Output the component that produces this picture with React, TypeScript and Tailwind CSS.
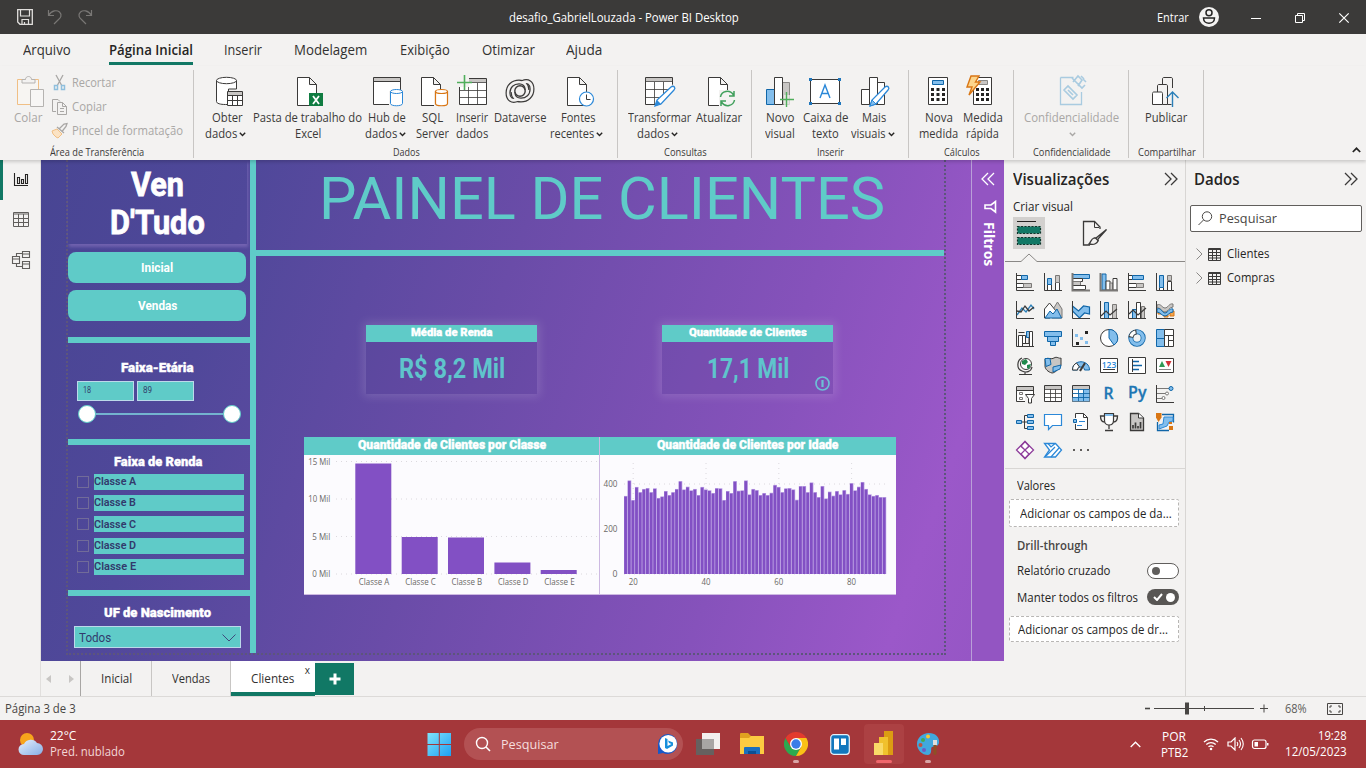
import React, { useLayoutEffect, useRef, useState } from 'react';

type FitProps = { w: number; children: string; className?: string };

/* Sets one line of text to an exact width, whatever the metrics of the installed font. */
function Fit({ w, children, className = '' }: FitProps) {
  const ref = useRef<HTMLSpanElement>(null);
  const [k, setK] = useState(1);
  useLayoutEffect(() => {
    if (ref.current && ref.current.offsetWidth) setK(w / ref.current.offsetWidth);
  }, [w, children]);
  return (
    <span className={`inline-block shrink-0 whitespace-nowrap ${className}`} style={{ width: w }}>
      <span ref={ref} className="inline-block origin-left" style={{ transform: `scaleX(${k})` }}>
        {children}
      </span>
    </span>
  );
}

function Svg({ s, children, className = '' }: { s: number; children: React.ReactNode; className?: string }) {
  return (
    <svg width={s} height={s} viewBox={`0 0 ${s} ${s}`} fill="none" className={`shrink-0 overflow-visible ${className}`}>
      {children}
    </svg>
  );
}

const INK = '#3b3a39';
const BLUE = '#2b88d8';
const SKY = '#83beec';
const NAVY = '#1066a8';

const Caret = ({ c = '#3b3a39' }: { c?: string }) => (
  <svg width="7" height="5" viewBox="0 0 7 5" fill="none" className="ml-[2px] inline-block">
    <path d="M.8.8 3.5 3.5 6.2.8" stroke={c} strokeWidth="1.4" />
  </svg>
);

/* ---------- Ribbon icons, 32 x 32 ---------- */
const Page = () => <path d="M5.5 2.5h12l7 7v21h-19z M17.5 2.5v7h7" fill="#fff" stroke={INK} />;
const ic: Record<string, React.ReactNode> = {
  paste: (
    <>
      <path d="M4.500 4.500h21v25h-21z" stroke="#f0bf85" fill="#f7f5f2" />
      <path d="M9 8V4.500h3.500c0-4 6-4 6 0H22V8z" fill="#f3f2f1" stroke="#b5b3b1" />
      <path d="M17.500 14.500h13v17h-13z" fill="#f7f6f5" stroke="#b5b3b1" />
    </>
  ),
  get: (
    <>
      <path d="M5.500 5.500v21c0 2 4 3 9 3h3V14h8V5.500" fill="#fff" stroke={INK} />
      <ellipse cx="15.500" cy="5.500" rx="10" ry="3.200" fill="#fff" stroke={INK} />
      <path d="M16.500 16.500h15v14h-15z" fill="#fff" stroke={INK} />
      <path d="M17 17h14v3H17z" fill="#c8c6c4" />
      <path d="M16.500 20.500h15M16.500 25.500h15M21.500 20v10M26.500 20v10" stroke={INK} />
    </>
  ),
  excel: (
    <>
      <Page />
      <path d="M17 18h14v13H17z" fill="#107c41" />
      <path d="m21 21 6 8m0-8-6 8" stroke="#fff" strokeWidth="1.800" />
    </>
  ),
  hub: (
    <>
      <path d="M2.500 2.500h27v27h-27z" fill="#fff" stroke={INK} />
      <path d="M3 3h26v3H3z" fill="#c8c6c4" /><path d="M2.500 6.500h27" stroke={INK} />
      <path d="M18 16h14v16H18z" fill="#f3f2f1" />
      <path d="M19.500 16.500v12c0 3 12 3 12 0v-12" fill="#fff" stroke={BLUE} />
      <ellipse cx="25.500" cy="16.500" rx="6" ry="2" fill="#fff" stroke={BLUE} />
    </>
  ),
  sql: (
    <>
      <Page />
      <path d="M18 16h14v16H18z" fill="#f3f2f1" />
      <path d="M19.500 16.500v12c0 3 12 3 12 0v-12" fill="#fff" stroke="#d97614" strokeWidth="1.200" />
      <ellipse cx="25.500" cy="16.500" rx="6" ry="2" fill="#fff" stroke="#d97614" strokeWidth="1.200" />
    </>
  ),
  insert: (
    <>
      <path d="M3.500 3.500h27v26h-27z" fill="#fff" stroke={INK} />
      <path d="M4 4h26v3H4z" fill="#c8c6c4" />
      <path d="M3.500 7.500h27M3.500 15.500h27M3.500 22.500h27M12.500 8v21M21.500 8v21" stroke={INK} strokeWidth=".8" />
      <path d="M0 0h13v12H0z" fill="#f3f2f1" />
      <path d="M8.500 0v15M1 7.500h15" stroke="#4fae5b" strokeWidth="1.600" />
    </>
  ),
  dataverse: (
    <>
      <path d="M13.500 24.500C8 27 4 24 4 18 4 11 9 7 15 7c5 0 8 3 8 8" stroke={INK} strokeWidth="5" />
      <path d="M18.500 7.500C24 5 28 8 28 14c0 7-5 11-11 11-5 0-8-3-8-8" stroke={INK} strokeWidth="5" />
      <path d="M13.500 24.500C8 27 4 24 4 18 4 11 9 7 15 7c5 0 8 3 8 8" stroke="#f3f2f1" strokeWidth="2.600" strokeLinecap="round" />
      <path d="M18.500 7.500C24 5 28 8 28 14c0 7-5 11-11 11-5 0-8-3-8-8" stroke="#f3f2f1" strokeWidth="2.600" strokeLinecap="round" />
      <circle cx="16" cy="16" r="5.200" stroke={INK} strokeWidth="1.400" />
    </>
  ),
  recent: (
    <>
      <Page />
      <circle cx="24.500" cy="24" r="7" fill="#fff" stroke={BLUE} strokeWidth="1.200" />
      <path d="M24.500 19.500V24.500h4" stroke={INK} />
    </>
  ),
  transform: (
    <>
      <path d="M2.500 2.500h27v27h-27z" fill="#fff" stroke={INK} />
      <path d="M3 3h26v3H3z" fill="#c8c6c4" />
      <path d="M2.500 6.500h27M2.500 14.500h27M2.500 22.500h27M11.500 7v22M20.500 7v22" stroke={INK} strokeWidth=".8" />
      <path d="M16 32h16V14L29 9z" fill="#f3f2f1" />
      <path d="m12 31 2-6 14-13c3-2 5 1 3 3L18 29z" fill="#fff" stroke={BLUE} strokeWidth="1.300" />
      <path d="m12 31 2-6 4 4z" fill={BLUE} />
    </>
  ),
  refresh: (
    <>
      <Page />
      <path d="M16 15h16v17H16z" fill="#f3f2f1" />
      <path d="M17.500 22c1-6 9-8 13-2M31 16v5h-5M31.500 25c-1 6-9 8-13 2M18 31v-5h5" stroke="#3f9f5b" strokeWidth="1.500" />
    </>
  ),
  newvis: (
    <>
      <path d="M2.500 14.500h8v15h-8z" fill={SKY} stroke={NAVY} />
      <path d="M18.500 7.500h7v22h-7z" fill="#c8c6c4" stroke="#8a8886" />
      <path d="M10.500 2.500h8v27h-8z" fill="#fff" stroke={INK} />
      <path d="M20 20h12v12H20z" fill="#f3f2f1" opacity=".7" />
      <path d="M22.500 17v15M16 24.500h14" stroke="#4fae5b" strokeWidth="1.400" />
    </>
  ),
  textbox: (
    <>
      <path d="M1.500 4.500h29v24h-29z" fill="#fff" stroke={INK} />
      <path d="M0 3h3v3H0zM29 3h3v3h-3zM0 27h3v3H0zM29 27h3v3h-3z" fill="#1f77bd" />
      <path d="m11 23 5-13 5 13M12.500 18.500h7" stroke={BLUE} strokeWidth="1.400" />
    </>
  ),
  morevis: (
    <>
      <path d="M3.500 14.500h8v15h-8zM19.500 7.500h7v22h-7zM11.500 2.500h8v27h-8z" fill="#fff" stroke={INK} />
      <path d="m12 31 2-6 13-13c3-2 5 1 3 3L18 29z" fill="#fff" stroke={BLUE} strokeWidth="1.300" />
      <path d="m12 31 2-6 4 4z" fill={SKY} stroke={BLUE} />
    </>
  ),
  calc: (
    <g transform="translate(-1 0)">
      <path d="M6.500 2.500h19v27h-19z" fill="#fff" stroke={INK} />
      <path d="M10.500 5.500h11v4h-11z" fill={SKY} stroke={NAVY} />
      <path d="M9 13h3v3H9zM14.500 13h3v3h-3zM20 13h3v3h-3zM9 18h3v3H9zM14.500 18h3v3h-3zM20 18h3v3h-3zM9 23h3v3H9zM14.500 23h3v3h-3zM20 23h3v3h-3z" fill="#252423" />
    </g>
  ),
  quick: (
    <g transform="translate(-1 0)">
      <path d="M7.500 2.500h18v27h-18z" fill="#fff" stroke={INK} />
      <path d="M12.500 5.500h9v4h-9z" fill="#c8c6c4" stroke="#8a8886" />
      <path d="M10 13h3v3h-3zM15 13h3v3h-3zM20 13h3v3h-3zM10 18h3v3h-3zM15 18h3v3h-3zM20 18h3v3h-3zM10 23h3v3h-3zM15 23h3v3h-3zM20 23h3v3h-3z" fill="#252423" />
      <path d="M5 1h8L9.500 7H14L3 20l3-8H1z" fill="#fcd58c" stroke="#d97614" strokeWidth="1.400" />
    </g>
  ),
  conf: (
    <>
      <path d="M5.500 2.500h13M5.500 2.500v27h21V17" stroke="#a9cbe0" strokeWidth="1.300" />
      <path d="m9 15 4-4 9 9-4 4zM13 15l5 5M17 3l10 10 3-3M18 7l5-6 4 4-4 6M26 1l3 3M31 7l-3-3" stroke="#a9cbe0" strokeWidth="1.600" />
    </>
  ),
  publish: (
    <>
      <path d="M2.500 18.500c0-1 .5-1.500 1.500-1.500h7c1 0 1.500.5 1.500 1.500v11h-10z" fill="#fff" stroke={INK} />
      <path d="M7.500 17v-6c0-1 .5-1.500 1.500-1.500h7c1 0 1.500.5 1.500 1.500v18.500h-5M12.500 9V4c0-1 .5-1.500 1.500-1.500h7c1 0 1.500.5 1.500 1.500v9M17.500 29.500h4" stroke={INK} />
      <path d="M22.500 32V17M16.500 23l6-6 6 6" stroke="#2b7fb8" strokeWidth="1.400" />
    </>
  ),
};

type Line = [string, number];
function RibbonItem({ icon, box, a, b, caret, dim }: { icon: string; box: string; a: Line; b?: Line; caret?: boolean; dim?: boolean }) {
  return (
    <div className={`flex flex-col items-center ${box} ${dim ? 'text-[#a9a7a5]' : 'text-[#3b3a39]'}`}>
      <Svg s={32}>{ic[icon]}</Svg>
      <div className="mt-[3px] flex h-4 items-center text-[12px] leading-4"><Fit w={a[1]}>{a[0]}</Fit></div>
      <div className={`flex h-4 items-center text-[12px] leading-4 ${b && caret ? 'pr-[3px]' : ''}`}>
        {b && <Fit w={b[1]}>{b[0]}</Fit>}
        {caret && <Caret c={dim ? '#a9a7a5' : '#252423'} />}
      </div>
    </div>
  );
}
function Group({ box, label, children }: { box: string; label: Line; children: React.ReactNode }) {
  return (
    <div className={`flex h-[88px] flex-col border-r border-[#c8c6c4] ${box}`}>
      <div className="flex h-[77px] pt-[5px]">{children}</div>
      <div className="flex h-[12px] items-center justify-center pl-px text-[10px] leading-none text-[#3b3a39]"><Fit w={label[1]}>{label[0]}</Fit></div>
    </div>
  );
}

/* ---------- Visual gallery icons, 18 x 18 ---------- */
const axis = <path d="M.5 0v17.500H18" stroke={INK} />;
const B = ({ d }: { d: string }) => <path d={d} fill={SKY} stroke={NAVY} />;
const G = ({ d }: { d: string }) => <path d={d} fill="#c8c6c4" stroke="#7a7876" />;
const W = ({ d }: { d: string }) => <path d={d} fill="#fff" stroke={INK} />;

const gallery: React.ReactNode[] = [
  <><W d="M.5 2.500h5v4h-5zM.5 10.500h8v4h-8z" /><B d="M5.500 2.500h6v4h-6z" /><G d="M7.500 10.500h8v4h-8z" />{axis}</>,
  <><W d="M3.500 11.500h4v6h-4zM11.500 9.500h4v8h-4z" /><B d="M3.500 5.500h4v6h-4z" /><G d="M11.500 2.500h4v7h-4z" />{axis}</>,
  <><B d="M.5 1.500h17v4H.5z" /><W d="M.5 5.500h10v3H.5z" /><G d="M.5 8.500h8v4H.5z" /><W d="M.5 12.500h13v4H.5z" /><path d="M.5 0v17.500H18" stroke="#7a7876" strokeWidth="2" /></>,
  <><B d="M2 1h4v16H2z" /><W d="M6 8h4v9H6z" /><G d="M10 10h3v7h-3z" /><W d="M13 5.500h4V17h-4z" /><path d="M.5 0v17.500H18" stroke="#7a7876" strokeWidth="2" /></>,
  <><W d="M.5 2.500h4v4h-4zM.5 10.500h8v4h-8z" /><B d="M4.500 2.500h11v4h-11z" /><G d="M8.500 10.500h7v4h-7z" />{axis}</>,
  <><W d="M3.500 14.500h4v3h-4zM11.500 8.500h4v9h-4z" /><B d="M3.500 2.500h4v12h-4z" /><G d="M11.500 2.500h4v5h-4z" />{axis}</>,
  <><path d="m1 14 5-7 4 4 5-7 3 4" stroke="#2b7fb8" strokeWidth="1.300" /><path d="m1 10 4 1 4-6 4 5 5-4" stroke={INK} strokeWidth="1.300" />{axis}</>,
  <><path d="m8 10 5.500-9L18 8v9H8z" fill="#c8c6c4" stroke="#7a7876" /><path d="M.5 17V8l5-6L12 10l-6 7z" fill="#fff" stroke={INK} /><B d="m1 17 5-7 3 3 4-5 4.500 9z" /></>,
  <><path d="m.5 5 6 5 5-5 6 1v7l-5-1-5 5-7-7z" fill={SKY} stroke={NAVY} strokeWidth="1.200" />{axis}</>,
  <><B d="M4.500 1.500h4v16h-4z" /><G d="M12.500 3.500h4v14h-4z" /><path d="m1 15 5-5 4 4 7-6" stroke={INK} strokeWidth="1.200" />{axis}</>,
  <><B d="M4.500 8.500h4v9h-4z" /><W d="M8.500 1.500h4v16h-4z" /><G d="M13.500 5.500h3v12h-3z" /><path d="m1 13 4-4 5 5 8-7" stroke={INK} strokeWidth="1.200" />{axis}</>,
  <><path d="M2 8h3v5H2zM8 12h4v4H8zM14 10h4v5h-4z" fill="#f2a44c" stroke="#d97614" /><path d="M1 4c4-2 5 3 8 3s4-5 8-4v3c-4 0-5 5-8 5s-5-5-8-4z" fill="#c8c6c4" stroke="#7a7876" /><path d="M1 8c4-2 5 4 8 4s4-5 8-4v3c-4 0-5 4-8 4s-5-4-8-4z" fill={SKY} stroke={NAVY} />{axis}</>,
  <><W d="M2.500 6.500h4v11h-4zM6.500 6.500h3v8h-3z" /><path d="M2.500 3.500h6M9 14.500h4V3" stroke={INK} /><B d="M10.500 2.500h3v6h-3z" /><W d="M13.500 2.500h3v15h-3z" />{axis}</>,
  <><B d="M.5 2.500h17v5H.5zM3.500 7.500h11v5h-11zM6.500 12.500h5v4h-5z" /></>,
  <>{axis}<path d="M13 2h3v3h-3zM4 13h3v3H4z" fill="#252423" /><path d="M3 5h3v3H3zM8 8h3v3H8zM13 12h3v3h-3z" fill={SKY} /></>,
  <><circle cx="9" cy="9" r="8.500" fill="#fff" stroke={INK} /><B d="M9 .5A8.500 8.500 0 0 1 14 16L9 9z" /></>,
  <><circle cx="9" cy="9" r="6.200" stroke={NAVY} strokeWidth="5" /><circle cx="9" cy="9" r="6.200" stroke={SKY} strokeWidth="3.400" /><path d="M2.900 8.500A6.200 6.200 0 0 1 8.500 2.900" stroke={INK} strokeWidth="5" /><path d="M3 7.500A6.200 6.200 0 0 1 7.500 3" stroke="#fff" strokeWidth="3.200" /></>,
  <><B d="M.5.5h8v9h-8zM.5 9.500h8v8h-8z" /><W d="M8.500.5h9v6h-9zM8.500 6.500h4v11h-4zM12.500 6.500h5v5h-5zM12.500 11.500h5v6h-5z" /></>,
  <><path d="M6 1C1 3 0 12 6 14c4 2 9 1 10-4M3 17.500h13M9 15v2" stroke={INK} strokeWidth="1.200" /><circle cx="10" cy="7" r="5.500" fill="#fff" stroke={INK} /><path d="M6 4l4-2 2 3-3 3-3-1zM11 8l4-1-2 5-2-1z" fill="#1f8a4c" /></>,
  <><path d="M1 2c4-2 6 1 9-1s5 1 7 0v7c-2 4-6 8-9 8-4-1-7-4-7-7z" fill="#c8c6c4" stroke={INK} /><B d="M1 1.500h5l1 6-5 2zM9 10l8-2-1 4-7 3z" /></>,
  <><path d="M.5 13C.5 2 17.500 2 17.500 13h-5c0-4-7-4-7 0z" fill={SKY} stroke={NAVY} /><path d="M.5 13c0-4 2-6 4-7l3 4c-1 0-2 1-2 3z" fill="#fff" stroke={INK} /><path d="m8 14 5-8" stroke={INK} strokeWidth="2" /></>,
  <><path d="M.5 1.500h17v14H.5z" fill="#fff" stroke={INK} /><text x="9" y="11" textAnchor="middle" fontSize="8.500" fontFamily="Open Sans" fontWeight="600" fill={BLUE}>123</text><path d="M3 12.500h12" stroke={INK} /></>,
  <><W d="M.5.5h17v16H.5z" /><path d="M4.500 2v13" stroke={INK} /><path d="M5 4.500h6M5 8.500h9M5 12.500h6" stroke="#1066a8" strokeWidth="1.600" /></>,
  <><W d="M.5 1.500h17v14H.5z" /><path d="m3 10 3-6 3 6z" fill="#2f9a55" /><path d="m9.500 4 3 6 3-6z" fill="#d13438" /><path d="M3 12.500h12" stroke="#8a8886" /></>,
  <><W d="M.5 1.500h17v15H.5z" /><path d="M1 2h16v3H1z" fill="#c8c6c4" /><path d="M.5 5.500h17" stroke={INK} /><path d="M3.500 7.500h3v2h-3zM3.500 12.500h3v2h-3z" stroke="#7a7876" /><path d="M9 9h9v8H9z" fill="#f3f2f1" /><path d="M9.500 9.500h9l-3 4V18h-3v-4.500z" fill="#fff" stroke={INK} /></>,
  <><W d="M.5.5h17v16H.5z" /><path d="M1 1h16v3H1z" fill="#c8c6c4" /><path d="M.5 4.500h17M.5 8.500h17M.5 12.500h17M6.500 4v12M11.500 4v12" stroke={INK} strokeWidth=".8" /></>,
  <><W d="M.5.5h17v16H.5z" /><path d="M1 1h16v3H1z" fill="#c8c6c4" /><path d="M11.500 4h6v4h-6zM6.500 8.500h11v8h-11zM.5 12.500h6v4h-6z" fill={SKY} /><path d="M.5 4.500h17M.5 8.500h17M.5 12.500h17M6.500 4v12M11.500 4v12" stroke={NAVY} strokeWidth=".9" /></>,
  <text x="3.500" y="14" fontSize="16" fontFamily="Open Sans" fontWeight="600" fill="#1f77b4" stroke="#1f77b4" strokeWidth=".3" textLength="10" lengthAdjust="spacingAndGlyphs">R</text>,
  <text x="0" y="13" fontSize="16" fontFamily="Open Sans" fontWeight="600" fill="#1f77b4" stroke="#1f77b4" strokeWidth=".3" textLength="18.500" lengthAdjust="spacingAndGlyphs">Py</text>,
  <>{axis}<path d="M1 3.500h12M1 8.500h9M1 13.500h5" stroke="#7a7876" /><circle cx="15" cy="3.500" r="2" fill={SKY} stroke={NAVY} /><circle cx="11" cy="8.500" r="1.500" fill="#fff" stroke="#7a7876" /><circle cx="7.500" cy="13" r="1.500" fill="#fff" stroke="#7a7876" /></>,
  <><path d="M5 9h3.500m3-6.500h-3v13h3M8.500 9h3" stroke={INK} /><B d="M.5 7.500h5v3h-5zM11.500 1.500h6v3h-6zM11.500 7.500h6v3h-6zM11.500 13.500h6v3h-6z" /></>,
  <path d="M.5 1.500h17v11H8.500l-4 4v-4h-4z" fill="#fff" stroke={BLUE} strokeWidth="1.200" />,
  <><path d="M3.500 5V.5h8l4 4v12h-12V11" fill="#fff" stroke={INK} /><path d="M11.500.5v4h4" stroke={INK} /><path d="M1.500 6.500h3v3h-3z" fill={SKY} stroke={NAVY} /><path d="M7 8.500h6M5 12.500h5" stroke={BLUE} /></>,
  <><path d="M4.500 3H.5c0 4 1 6 4 6M13.500 3h4c0 4-1 6-4 6M9 12v4M5 17.500h8" stroke={INK} strokeWidth="1.300" /><path d="M4.500.5h9v7c0 6-9 6-9 0z" fill="#fff" stroke={INK} strokeWidth="1.200" /><path d="M5 1h8v2H5z" fill={SKY} /></>,
  <><path d="M2.500.500h8l5 4.500v12.500h-13z" fill="#c8c6c4" stroke={INK} strokeWidth="1.300" /><path d="M10.500.5v4.500h5" fill="#fff" stroke={INK} /><path d="M5 12v3.500M7.500 9.500v6M10 13v2.500M12.500 9v6.500" stroke={INK} strokeWidth="1.700" /></>,
  <><path d="M6 1.500h11.500v8M1.500 9v8.500H13" stroke={NAVY} strokeWidth="1.300" /><path d="M8 4h9v4l-4 1-2 4-8 3v-4l4-1z" fill={SKY} stroke={BLUE} /><path d="M2.500 9 0 4.500V0h5.500v4.500z" fill="#d97614" /><path d="M13 13h4v4h-4zM13 9h3v2h-3z" fill="#d97614" /></>,
  <><path d="m9 .5 8.500 8.500L9 17.500.5 9z" stroke="#8f3f9c" strokeWidth="1.300" fill="#fff" /><path d="m9 .500 4 4.500-4 4-4-4zM4.500 5 9 9l-4.500 4.500M13.500 5 9 9l4.500 4.500M9 9l-4 4 4 4.500 4-4.500z" stroke="#8f3f9c" strokeWidth="1.200" /></>,
  <><path d="M.5 2.500h11l6 6.500-6 7H.5l5-7z" fill="#fff" stroke={BLUE} strokeWidth="1.300" /><path d="m4 2.500 3 3.500 4-3.500M2 15l9-9M7 16l8-9" stroke={BLUE} strokeWidth="1.200" /></>,
  <path d="M1 8h2v2H1zM8 8h2v2H8zM15 8h2v2h-2z" fill="#605e5c" />,
];

/* ---------- Report data ---------- */
const classes = [
  { n: 'Classe A', x: 355.300, top: 463.500 },
  { n: 'Classe C', x: 401.700, top: 537 },
  { n: 'Classe B', x: 448, top: 537.500 },
  { n: 'Classe D', x: 494.400, top: 562.500 },
  { n: 'Classe E', x: 540.700, top: 570 },
];
const ages = [
  347, 416, 329, 387, 364, 378, 382, 364, 381, 338, 345, 369, 351, 364, 378, 413, 376, 388, 372, 378, 351, 387, 376, 372,
  360, 382, 381, 329, 369, 360, 413, 370, 372, 416, 354, 378, 373, 351, 360, 351, 361, 396, 387, 364, 381, 382, 376, 330,
  391, 391, 364, 407, 364, 342, 391, 336, 366, 348, 369, 354, 373, 356, 404, 372, 388, 409, 378, 354, 347, 351, 342, 342,
];

function ClassChart() {
  return (
    <svg width="295" height="139" viewBox="304 455 295 139" className="bg-[#fcfbfe]" fontFamily="Open Sans, sans-serif" fontSize="8.800" fill="#6b6966">
      {[['15 Mil', 461.500, 22], ['10 Mil', 499, 22], ['5 Mil', 536.500, 18], ['0 Mil', 574, 18]].map(([t, y, w]) => (
        <g key={t as string}>
          <path d={`M336 ${y}H597`} stroke="#d3d1d6" strokeWidth=".8" strokeDasharray="1 4" />
          <text x={330.200 - (w as number)} y={(y as number) + 3} textLength={w as number} lengthAdjust="spacingAndGlyphs">{t}</text>
        </g>
      ))}
      {classes.map((c) => (
        <g key={c.n}>
          <rect x={c.x} y={c.top} width="36" height={574 - c.top} fill="#8250c4" />
          <text x={c.x + 3.500} y="585" textLength="30.500" lengthAdjust="spacingAndGlyphs">{c.n}</text>
        </g>
      ))}
    </svg>
  );
}
function AgeChart() {
  return (
    <svg width="296" height="139" viewBox="600 455 296 139" className="bg-[#fcfbfe]" fontFamily="Open Sans, sans-serif" fontSize="8.800" fill="#6b6966">
      {[[400, 484], [200, 529], [0, 574]].map(([t, y]) => (
        <g key={t}>
          <path d={`M624 ${y}H888`} stroke="#d3d1d6" strokeWidth=".8" strokeDasharray="1 4" />
          <text x={t ? 603.500 : 612.500} y={y + 3} textLength={t ? 14 : 5} lengthAdjust="spacingAndGlyphs">{t}</text>
        </g>
      ))}
      {[20, 40, 60, 80].map((t, i) => (
        <g key={t}>
          <path d={`M${633.200 + i * 72.800} 463V574`} stroke="#d3d1d6" strokeWidth=".8" strokeDasharray="1 4" />
          <text x={628.700 + i * 72.800} y="585" textLength="9" lengthAdjust="spacingAndGlyphs">{t}</text>
        </g>
      ))}
      {ages.map((v, i) => {
        const h = v * 0.225;
        return (
          <g key={i}>
            <rect x={624 + i * 3.642} y={574 - h} width="3.642" height={h} fill="#b79be2" />
            <rect x={624.200 + i * 3.642} y={574.700 - h} width="2.750" height={h - 0.700} fill="#8250c4" />
          </g>
        );
      })}
    </svg>
  );
}

const din = "font-['Roboto',sans-serif]";
const heavy = 'font-black [-webkit-text-stroke:0.35px_currentColor]';
const Rule = () => <div className="h-[6px] bg-[#5fcbc8]" />;

function Kpi({ title, value, info }: { title: Line; value: Line; info?: boolean }) {
  return (
    <div className="relative flex h-[69px] w-[171px] flex-col shadow-[0_0_9px_3px_rgba(255,255,255,0.13)]">
      <div className={`flex h-[17px] items-center justify-center bg-[#5fcbc8] pb-[2px] text-[11.500px] leading-none text-white ${heavy}`}><Fit w={title[1]}>{title[0]}</Fit></div>
      <div className="flex flex-1 items-center justify-center bg-[#4d3a8f]/15 pt-[2px] text-[28px] leading-none font-bold text-[#5fc4cc]"><Fit w={value[1]}>{value[0]}</Fit></div>
      {info && (
        <svg className="absolute right-[3px] bottom-[3px]" width="15" height="15" viewBox="0 0 15 15" fill="none">
          <circle cx="7.500" cy="7.500" r="6.500" stroke="#6cbfd6" strokeWidth="1.700" /><path d="M7.500 4v7" stroke="#6cbfd6" strokeWidth="2.200" />
        </svg>
      )}
    </div>
  );
}

function Sidebar() {
  const title = `flex h-4 items-center justify-center text-[13.500px] text-white ${heavy}`;
  const button = 'flex h-[31px] w-[178px] items-center justify-center rounded-lg bg-[#5fcbc8] text-[13px] font-bold text-white';
  return (
    <div className="flex w-[182px] flex-col">
      <div className="flex h-[84px] w-[179px] flex-col items-center pt-[5px] text-[34px] leading-[38px] font-bold text-white shadow-[1px_3px_3px_rgba(180,150,220,0.35)] [-webkit-text-stroke:0.8px_currentColor]">
        <Fit w={53}>Ven</Fit>
        <Fit w={95}>D'Tudo</Fit>
      </div>
      <div className={`mt-2 ${button}`}><Fit w={32}>Inicial</Fit></div>
      <div className={`mt-[7px] mb-4 ${button}`}><Fit w={39}>Vendas</Fit></div>
      <Rule />
      <div className="flex h-24 flex-col pt-4 pl-[9px]">
        <div className={`w-[161px] ${title}`}><Fit w={73}>Faixa-Etária</Fit></div>
        <div className="mt-[6px] flex gap-[3px] text-[9px] text-[#33406b]">
          <div className="flex h-5 w-[57px] items-center border border-[#bcd9ea] bg-[#5fcbc8] pl-[5px]"><Fit w={8}>18</Fit></div>
          <div className="flex h-5 w-[57px] items-center border border-[#bcd9ea] bg-[#5fcbc8] pl-[5px]"><Fit w={9}>89</Fit></div>
        </div>
        <div className="mt-[4px] ml-px flex h-[18px] w-[163px] items-center">
          <div className="size-[18px] rounded-full border border-[#5fcbc8] bg-white" />
          <div className="h-[2px] flex-1 bg-[#74b3cf]" />
          <div className="size-[18px] rounded-full border border-[#5fcbc8] bg-white" />
        </div>
      </div>
      <Rule />
      <div className="flex h-[145px] flex-col pt-2 pl-[9px]">
        <div className={`w-[161px] ${title}`}><Fit w={88}>Faixa de Renda</Fit></div>
        <div className="mt-[5px] flex flex-col gap-[5.200px]">
          {['A', 'B', 'C', 'D', 'E'].map((c) => (
            <div key={c} className="flex h-4 items-center">
              <div className="size-3 border border-[#716b99]" />
              <div className="ml-[5px] flex h-4 w-[150px] items-center bg-[#5fcbc8] pt-px text-[11px] font-semibold text-[#323a6c]"><Fit w={42}>{`Classe ${c}`}</Fit></div>
            </div>
          ))}
        </div>
      </div>
      <Rule />
      <div className="flex flex-col pt-2 pl-[6px]">
        <div className={`w-[167px] ${title}`}><Fit w={107}>UF de Nascimento</Fit></div>
        <div className="mt-[6px] flex h-[22px] w-[167px] items-center justify-between border border-[#bcd9ea] bg-[#5fcbc8] pt-px pr-1 pl-1 text-[12px] text-[#323a6c]">
          <Fit w={32}>Todos</Fit>
          <svg width="14" height="8" viewBox="0 0 14 8" fill="none"><path d="m.5.5 6.500 6.500L13.500.5" stroke="#3f4a7c" /></svg>
        </div>
      </div>
    </div>
  );
}

function Canvas() {
  return (
    <div className={`flex h-[501px] w-[930px] bg-[linear-gradient(109deg,#484593_0%,#50489a_20%,#6a4ca8_46%,#8652bb_74%,#9b58c9_92%,#9656c5_100%)] ${din}`}>
      <div className="ml-[25px] flex h-[495px] w-[880px] border-x-2 border-b-2 border-dotted border-[#5d557c]">
        <Sidebar />
        <div className="h-[493px] w-[6px] bg-[#5fcbc8]" />
        <div className="flex w-[688px] flex-col">
          <div className="flex h-[90px] items-center justify-center pb-[13px] pl-[3px] text-[60px] leading-none text-[#5fcbc8]"><Fit w={566}>PAINEL DE CLIENTES</Fit></div>
          <Rule />
          <div className="mt-[69px] ml-[110px] flex gap-[125px]">
            <Kpi title={['Média de Renda', 81]} value={['R$ 8,2 Mil', 106]} />
            <Kpi title={['Quantidade de Clientes', 118]} value={['17,1 Mil', 82]} info />
          </div>
          <div className="mt-[43px] ml-[48px] flex w-[592px] gap-px border-b border-[#cdb9e2] bg-[#cdb9e2]">
            <div className="flex w-[295px] flex-col">
              <div className={`flex h-[18px] items-center justify-center bg-[#5fcbc8] pb-[2px] text-[12.500px] leading-none text-white ${heavy}`}><Fit w={188}>Quantidade de Clientes por Classe</Fit></div>
              <ClassChart />
            </div>
            <div className="flex w-[296px] flex-col">
              <div className={`flex h-[18px] items-center justify-center bg-[#5fcbc8] pr-px pb-[2px] text-[12.500px] leading-none text-white ${heavy}`}><Fit w={181}>Quantidade de Clientes por Idade</Fit></div>
              <AgeChart />
            </div>
          </div>
        </div>
      </div>
    </div>
  );
}

const Chevrons = ({ c = '#3b3a39', flip }: { c?: string; flip?: boolean }) => (
  <svg width="14" height="14" viewBox="0 0 14 14" fill="none" className={flip ? 'rotate-180' : ''}><path d="m1 1 6 6-6 6M7 1l6 6-6 6" stroke={c} strokeWidth="1.300" /></svg>
);

function Ribbon() {
  return (
    <div className="relative z-10 flex h-[94px] bg-[#f3f2f1] pt-1 shadow-[0_2px_3px_rgba(0,0,0,0.16)]">
      <div className="flex h-[88px] w-[194px] flex-col border-r border-[#c8c6c4] text-[#a9a7a5]">
        <div className="flex h-[77px]">
          <div className="flex w-[50px] flex-col items-center pt-[5px] pl-[6px]">
            <Svg s={32} className="ml-px">{ic.paste}</Svg>
            <div className="mt-[3px] flex h-4 items-center text-[12px]"><Fit w={28}>Colar</Fit></div>
          </div>
          <div className="flex flex-col pt-[1px] text-[12px]">
            <div className="flex h-6 items-center gap-[4px]">
              <Svg s={18}><path d="m6 1 6 11M13 1 7 12" stroke="#a9a7a5" strokeWidth="1.300" /><path d="M4.500 11.500h3v4h-3zM11.500 11.500h3v4h-3z" stroke="#8fbfdd" strokeWidth="1.500" /></Svg><Fit w={44}>Recortar</Fit>
            </div>
            <div className="flex h-6 items-center gap-[4px]">
              <Svg s={18}><path d="M6 13.500H2.500v-12H8l2 2M7.500 4.500h5l4 4v8h-9zM12.500 4.500v4h4M10 10.500h4M10 13.500h4" stroke="#a9a7a5" /></Svg><Fit w={35}>Copiar</Fit>
            </div>
            <div className="flex h-6 items-center gap-[4px]">
              <Svg s={18}><path d="m2 9 5-2 5 5-4 4-2-1-3-3z" fill="#fbe3c4" stroke="#f0bf85" /><path d="m7 5 7 6M9 7l5-5 3-.5-1 3-4 5" stroke="#a9a7a5" strokeWidth="1.300" /></Svg><Fit w={111}>Pincel de formatação</Fit>
            </div>
          </div>
        </div>
        <div className="flex h-[12px] items-center justify-center text-[10px] leading-none text-[#3b3a39]"><Fit w={94}>Área de Transferência</Fit></div>
      </div>
      <Group box="w-[424px]" label={['Dados', 27]}>
        <RibbonItem icon="get" box="ml-[7px] w-[52px]" a={['Obter', 31]} b={['dados', 32]} caret />
        <RibbonItem icon="excel" box="w-[109px]" a={['Pasta de trabalho do', 109]} b={['Excel', 26]} />
        <RibbonItem icon="hub" box="w-[50px]" a={['Hub de', 38]} b={['dados', 32]} caret />
        <RibbonItem icon="sql" box="w-10" a={['SQL', 21]} b={['Server', 33]} />
        <RibbonItem icon="insert" box="w-10" a={['Inserir', 32]} b={['dados', 32]} />
        <RibbonItem icon="dataverse" box="w-14" a={['Dataverse', 52]} />
        <RibbonItem icon="recent" box="w-[60px]" a={['Fontes', 35]} b={['recentes', 44]} caret />
      </Group>
      <Group box="w-[134px]" label={['Consultas', 43]}>
        <RibbonItem icon="transform" box="ml-2 w-[66px]" a={['Transformar', 63]} b={['dados', 32]} caret />
        <RibbonItem icon="refresh" box="w-[53px]" a={['Atualizar', 46]} />
      </Group>
      <Group box="w-[157px]" label={['Inserir', 27]}>
        <RibbonItem icon="newvis" box="ml-[6px] w-11" a={['Novo', 28]} b={['visual', 30]} />
        <RibbonItem icon="textbox" box="w-[46px]" a={['Caixa de', 45]} b={['texto', 27]} />
        <RibbonItem icon="morevis" box="w-[52px]" a={['Mais', 24]} b={['visuais', 35]} caret />
      </Group>
      <Group box="w-[105px]" label={['Cálculos', 36]}>
        <RibbonItem icon="calc" box="ml-2 w-[43px]" a={['Nova', 28]} b={['medida', 39]} />
        <RibbonItem icon="quick" box="w-[45px]" a={['Medida', 40]} b={['rápida', 33]} />
      </Group>
      <Group box="w-[115px]" label={['Confidencialidade', 78]}>
        <RibbonItem icon="conf" box="w-[114px]" a={['Confidencialidade', 95]} caret dim />
      </Group>
      <Group box="w-[75px]" label={['Compartilhar', 58]}>
        <RibbonItem icon="publish" box="w-[74px]" a={['Publicar', 42]} />
      </Group>
      <div className="flex flex-1 items-end justify-end pr-[5px] pb-[7px]">
        <svg width="9" height="6" viewBox="0 0 9 6" fill="none"><path d="m.8 5 3.700-3.700L8.200 5" stroke="#252423" strokeWidth="1.700" /></svg>
      </div>
    </div>
  );
}

function Visualizations() {
  return (
    <div className="flex h-[536px] w-[181px] flex-col border-r border-[#d8d6d4] text-[12px] text-[#252423]">
      <div className="flex h-[38px] items-center justify-between pr-[7px] pl-2 text-[16px] font-semibold"><Fit w={96}>Visualizações</Fit><Chevrons /></div>
      <div className="flex h-[17px] items-center pl-2"><Fit w={60}>Criar visual</Fit></div>
      <div className="mt-[2px] flex gap-[34px] pl-2">
        <div className="flex size-8 items-center justify-center bg-[#d2d0ce]">
          <svg width="26" height="26" viewBox="0 0 26 26" fill="none"><path d="M1 1.500h19" stroke="#252423" /><path d="M1.500 6.500h23v7h-23zM1.500 17.500h23v7h-23z" fill="#117865" stroke="#12332b" strokeWidth="1.200" strokeDasharray="2 1.500" /></svg>
        </div>
        <div className="flex size-8 items-center justify-center">
          <svg width="26" height="26" viewBox="0 0 26 26" fill="none"><path d="M8 25H1.500V1.500h11L18 7v2" stroke={INK} strokeWidth="1.300" /><path d="M12.500 1.500V7.500H17" stroke={INK} /><path d="M24.500 9.500 14 18l-2 0c-3 1-3 4-5 6 4 1 7 1 9-3l0-2z" fill="#f3f2f1" stroke={INK} strokeWidth="1.300" /><path d="m13.500 18 3 3" stroke={INK} strokeWidth="1.300" /></svg>
        </div>
      </div>
      <svg width="180" height="10" viewBox="0 0 180 10" fill="none" className="mt-1"><path d="M0 8.500h16l8-7.500 8 7.500h148" stroke="#8a8886" /></svg>
      <div className="mt-[10px] grid grid-cols-[repeat(6,18px)] gap-[10px] pl-[11px]">
        {gallery.map((g, i) => <Svg key={i} s={18}>{g}</Svg>)}
      </div>
      <div className="mt-[9px] h-px bg-[#d8d6d4]" />
      <div className="flex flex-col pr-[6px] pl-1">
        <div className="mt-[9px] flex h-4 items-center pl-2"><Fit w={38}>Valores</Fit></div>
        <div className="mt-[5px] flex h-[28px] items-center rounded-[2px] border border-dashed border-[#b8b6b4] bg-white pt-px pl-[10px]"><Fit w={152}>Adicionar os campos de da...</Fit></div>
        <div className="mt-[11px] flex h-4 items-center pl-2 font-semibold text-[#484644]"><Fit w={71}>Drill-through</Fit></div>
        <div className="mt-[9px] flex h-4 items-center justify-between pl-2"><Fit w={93}>Relatório cruzado</Fit>
          <div className="flex h-4 w-8 items-center rounded-full border border-[#605e5c] bg-white pl-1"><div className="size-2 rounded-full bg-[#605e5c]" /></div>
        </div>
        <div className="mt-[10px] flex h-4 items-center justify-between pl-2"><Fit w={121} className="pt-px">Manter todos os filtros</Fit>
          <div className="flex h-4 w-8 items-center justify-between rounded-full bg-[#585654] pr-1 pl-[6px]">
            <svg width="10" height="8" viewBox="0 0 10 8" fill="none"><path d="m1 4 3 3 5-6" stroke="#fff" strokeWidth="2" /></svg>
            <div className="size-[9px] rounded-full bg-white" />
          </div>
        </div>
        <div className="mt-[11px] flex h-[26px] items-center rounded-[2px] border border-dashed border-[#b8b6b4] bg-white pt-px pl-2"><Fit w={150}>Adicionar os campos de dr...</Fit></div>
      </div>
    </div>
  );
}

function DataPane() {
  return (
    <div className="flex w-[180px] flex-col text-[12px] text-[#252423]">
      <div className="flex h-[38px] items-center justify-between pr-2 pl-2 text-[16px] font-semibold"><Fit w={46}>Dados</Fit><Chevrons /></div>
      <div className="mt-[7px] mb-[10px] ml-1 flex h-[27px] w-[172px] items-center rounded-[2px] border border-[#605e5c] bg-white pl-[7px] text-[#484644]">
        <svg width="15" height="15" viewBox="0 0 15 15" fill="none"><circle cx="9" cy="5.500" r="4.700" stroke="#484644" /><path d="M5.500 9 .5 14" stroke="#484644" /></svg>
        <span className="ml-[6px] pt-px text-[12.500px]"><Fit w={58}>Pesquisar</Fit></span>
      </div>
      {([['Clientes', 42], ['Compras', 48]] as Line[]).map(([t, w]) => (
        <div key={t} className="flex h-6 items-center pl-[10px]">
          <svg width="7" height="12" viewBox="0 0 7 12" fill="none"><path d="m.5.5 5.500 5.500-5.500 5.500" stroke="#8a8886" /></svg>
          <svg width="13" height="13" viewBox="0 0 13 13" fill="none" className="ml-[5px]"><path d="M.5.500h12v12H.5zM.5 1.500h12M.5 4.500h12M.5 7.500h12M.5 10h12M4.500 2v10M8.500 2v10" stroke={INK} /></svg>
          <span className="ml-[6px]"><Fit w={w}>{t}</Fit></span>
        </div>
      ))}
    </div>
  );
}

function Taskbar() {
  return (
    <div className="flex h-12 bg-[#a4373a] text-[12px] text-white">
      <div className="flex w-[427px] items-center pl-[17px]">
        <svg width="28" height="26" viewBox="0 0 28 26"><defs><linearGradient id="cl" x1="0" y1="0" x2="1" y2="1"><stop stopColor="#e7f0fb" /><stop offset="1" stopColor="#86aee6" /></linearGradient></defs><circle cx="10" cy="9" r="7" fill="#f7a51c" /><path d="M7 24a5.500 5.500 0 0 1 0-11 7.500 7.500 0 0 1 13-1 6 6 0 0 1 0 12z" fill="url(#cl)" /></svg>
        <div className="ml-[5px] flex flex-col leading-4"><Fit w={26}>22°C</Fit><Fit w={75} className="text-[#f2d6d6]">Pred. nublado</Fit></div>
      </div>
      <div className="flex items-center">
        <svg width="24" height="24" viewBox="0 0 24 24"><defs><linearGradient id="wi" x1="0" y1="0" x2="1" y2="1"><stop stopColor="#7fe3fb" /><stop offset="1" stopColor="#1ea0f2" /></linearGradient></defs><path d="M.5 1h11.300v11H.5zM12.800 1h11.200v11H12.800zM.5 13h11.300v11H.5zM12.800 13h11.200v11H12.800z" fill="url(#wi)" /></svg>
        <div className="ml-[13px] flex h-8 w-[219px] items-center rounded-full bg-[#b35153] pl-[11px] text-[#f6dede]">
          <svg width="16" height="16" viewBox="0 0 16 16" fill="none"><circle cx="7" cy="7" r="5.500" stroke="#fff" strokeWidth="1.400" /><path d="m11 11 4 4" stroke="#fff" strokeWidth="1.600" /></svg>
          <span className="ml-[10px] pt-px"><Fit w={58}>Pesquisar</Fit></span>
          <svg width="20" height="21" viewBox="0 0 20 21" className="ml-[99px]"><path d="M10 0a10 10 0 1 1-5 19L0 20V10A10 10 0 0 1 10 0" fill="#1758c7" /><circle cx="10.200" cy="9.800" r="8.800" fill="#fff" /><path d="m7 4 2.500 1v7l4-2-2.500-1-1-2.500 5 2v3l-6 3.500L7 14z" fill="#168fdc" /></svg>
        </div>
        <svg width="24" height="24" viewBox="0 0 24 24" className="ml-[13px]"><path d="M0 7h18v16H0z" fill="#66605f" /><path d="M6 1h18v16H6z" fill="#f2efee" /><path d="M6 7h12v10H6z" fill="#a8a5a4" /></svg>
        <svg width="24" height="24" viewBox="0 0 24 24" className="ml-[20px]"><path d="M0 2q0-1 1-1h7l3 3h12q1 0 1 1v17H0z" fill="#e0a020" /><path d="M0 6h9l2-2h13v18H0z" fill="#fccb41" /><path d="M4 22v-6q0-1 1-1h14q1 0 1 1v6z" fill="#1b6fbd" /><path d="M8 22v-3h8v3z" fill="#0d4f92" /></svg>
        <div className="ml-[20px] flex h-12 w-6 flex-col items-center pt-3">
          <svg width="24" height="24" viewBox="0 0 24 24"><path d="M1.600 6A12 12 0 0 0 12 24l5-9H7z" fill="#2da94f" /><path d="M22.400 6A12 12 0 0 1 12 24l5.200-9L12 6z" fill="#fbc116" /><path d="M1.600 6 6.800 15 12 6h10.400A12 12 0 0 0 1.600 6" fill="#e33b2e" /><circle cx="12" cy="12" r="6" fill="#fff" /><circle cx="12" cy="12" r="4.700" fill="#3b7de8" /></svg>
          <div className="mt-[4px] h-[3px] w-[6px] rounded-full bg-[#d9a5a6]" />
        </div>
        <svg width="20" height="21" viewBox="0 0 20 21" className="ml-[22px]"><rect x=".7" y=".7" width="18.600" height="19.600" rx="3" fill="#1277bd" stroke="#e6f1f9" strokeWidth="1.200" /><path d="M4 4.500h5v11H4zM11 4.500h5v6.500h-5z" fill="#fff" /></svg>
        <div className="ml-[14px] flex h-10 w-10 flex-col items-center rounded bg-[#ac4143] pt-[7px]">
          <svg width="20" height="25" viewBox="0 0 20 25"><path d="M10 0h9v24h-9z" fill="#dc9c12" /><path d="M5 6h9v18H5z" fill="#f0c12d" /><path d="M0 12h9v12H0z" fill="#f9da68" /></svg>
          <div className="mt-[4px] h-[3px] w-4 rounded-full bg-[#f0666c]" />
        </div>
        <div className="ml-[12px] flex h-12 w-6 flex-col items-center pt-3">
          <svg width="24" height="24" viewBox="0 0 24 24"><path d="M13 1c6 0 11 4 10 10-1 4-5 3-7 4s1 7-4 8C6 23 1 18 1 12 1 6 6 1 13 1" fill="#41a8dd" /><circle cx="12" cy="4.500" r="2" fill="#f7c92e" /><circle cx="7" cy="8" r="2" fill="#48a94d" /><circle cx="4.500" cy="13" r="2" fill="#c2513b" /><circle cx="8" cy="18" r="2" fill="#6a5bc4" /><path d="M17 8h4v5h-4z" fill="#ddd" /><path d="M17.500 13h3v9q-1.500 2-3 0z" fill="#8c5125" /></svg>
          <div className="mt-[4px] h-[3px] w-[6px] rounded-full bg-[#d9a5a6]" />
        </div>
      </div>
      <div className="flex flex-1 items-center justify-end pr-[19px]">
        <svg width="11" height="7" viewBox="0 0 11 7" fill="none"><path d="m.7 6 4.800-4.800L10.300 6" stroke="#fff" strokeWidth="1.300" /></svg>
        <div className="ml-[19px] flex w-[28px] flex-col items-center pt-[2px] leading-4"><Fit w={24}>POR</Fit><Fit w={27}>PTB2</Fit></div>
        <svg width="16" height="14" viewBox="0 0 16 14" fill="none" className="ml-[15px]"><path d="M1 5a10 10 0 0 1 14 0M3.300 7.500a7 7 0 0 1 9.400 0M5.500 9.800a4 4 0 0 1 5 0" stroke="#fff" strokeWidth="1.300" /><circle cx="8" cy="12" r="1.300" fill="#fff" /></svg>
        <svg width="17" height="14" viewBox="0 0 17 14" fill="none" className="ml-[8px]"><path d="M1 5h3l4-4v12L4 9H1z" stroke="#fff" strokeWidth="1.200" /><path d="M10 5q1.500 2 0 4M12 3q3 4 0 8M14 1q4.500 6 0 12" stroke="#fff" strokeWidth="1.100" /></svg>
        <svg width="18" height="12" viewBox="0 0 18 12" fill="none" className="ml-[7px]"><rect x="1.500" y="2" width="13.500" height="8.500" rx="2" stroke="#fff" strokeWidth="1.200" /><path d="M3.500 4h3.500v4.500H3.500zM16 5v2.500h1.500V5z" fill="#fff" /></svg>
        <div className="ml-[16px] flex w-[62px] flex-col items-end leading-4"><Fit w={29}>19:28</Fit><Fit w={62}>12/05/2023</Fit></div>
      </div>
    </div>
  );
}

export default function App() {
  return (
    <div className="flex h-[768px] w-[1366px] flex-col overflow-hidden bg-[#f3f2f1] font-['Open_Sans',sans-serif]">
      <div className="flex h-[34px] items-center bg-[#3b3a39] text-[12px] text-white">
        <div className="flex w-[509px] items-center gap-[14px] pl-[17px]">
          <Svg s={16}><path d="M.7.700h14.600v14.600H3L.7 13z" stroke="#e1dfdd" strokeWidth="1.300" /><path d="M3.500 1v6h9V1M5 15v-4.500h6.500V15M7.500 15v-2" stroke="#e1dfdd" strokeWidth="1.200" /></Svg>
          <Svg s={16}><path d="M1.500 1v5.500H7M1.500 6.500C5 1 10 1 12.500 3c3 3 1 6-1 7.500L7 15" stroke="#797775" strokeWidth="1.200" /></Svg>
          <Svg s={16}><path d="M14.500 1v5.500H9M14.500 6.500C11 1 6 1 3.500 3c-3 3-1 6 1 7.500L9 15" stroke="#797775" strokeWidth="1.200" /></Svg>
        </div>
        <Fit w={230} className="pt-px">desafio_GabrielLouzada - Power BI Desktop</Fit>
        <div className="flex flex-1 items-center justify-end pr-[17px]">
          <Fit w={32} className="pt-px">Entrar</Fit>
          <Svg s={20} className="ml-[10px]"><circle cx="10" cy="10" r="10" fill="#f3f2f1" /><circle cx="10" cy="5.800" r="3" stroke="#252423" strokeWidth="1.500" /><path d="M4.500 11h11c0 7-11 7-11 0z" stroke="#252423" strokeWidth="1.500" /></Svg>
          <Svg s={10} className="ml-[32px]"><path d="M0 6.500h10" stroke="#fff" /></Svg>
          <Svg s={10} className="ml-[34px]"><path d="M.5 3.500h7v7h-7zM2.500 3V1.500h7v7H8" stroke="#fff" /></Svg>
          <Svg s={10} className="ml-[34px]"><path d="m.3 1.300 9.400 9.400m0-9.400L.3 10.700" stroke="#fff" strokeWidth="1.200" /></Svg>
        </div>
      </div>
      <div className="flex h-8 items-start text-[14px] leading-none text-[#323130]">
        {([
          ['Arquivo', 48, 'ml-[23px] border-transparent'],
          ['Página Inicial', 84, 'ml-[38px] border-[#117865] font-semibold text-[#252423]'],
          ['Inserir', 38, 'ml-[31px] border-transparent'],
          ['Modelagem', 73, 'ml-[32px] border-transparent'],
          ['Exibição', 50, 'ml-[33px] border-transparent'],
          ['Otimizar', 53, 'ml-[32px] border-transparent'],
          ['Ajuda', 36, 'ml-[31px] border-transparent'],
        ] as [string, number, string][]).map(([t, w, c]) => (
          <div key={t} className={`flex h-[31px] items-center border-b-[3px] pt-[4px] ${c}`}><Fit w={w}>{t}</Fit></div>
        ))}
      </div>
      <Ribbon />
      <div className="flex h-[536px]">
        <div className="flex w-[41px] flex-col border-r border-[#e1dfdd]">
          <div className="flex h-10 items-center border-l-[3px] border-[#117865] pl-[10px]"><Svg s={16}><path d="M1.500 1v12.500H15M4.500 5.500h2v6h-2zM8.500 7.500h2v4h-2zM12.500 2.500h2v9h-2z" stroke="#252423" strokeWidth="1.100" /></Svg></div>
          <div className="flex h-10 items-center pl-[13px]"><Svg s={16}><path d="M.5.500h15v14H.5zM.5 2h15M.5 6.500h15M.5 10.500h15M5.500 2v12M10.500 2v12" stroke="#605e5c" /></Svg></div>
          <div className="flex h-10 items-center pl-[12px]"><Svg s={18}><path d="M.5 5.500h7v7h-7zM10.500.500h7v6h-7zM10.500 10.500h7v7h-7zM.5 8h7M10.500 3h7M10.500 13h7M4.500 5V2.500h6M4.500 13v2.500h6" stroke="#605e5c" strokeWidth="1.100" /></Svg></div>
        </div>
        <div className="flex w-[964px] flex-col">
          <div className="flex h-[501px]">
            <Canvas />
            <div className="flex w-[33px] flex-col items-center border-l border-[#b9a0d8] bg-[#9355c2] pt-3">
              <Chevrons c="#fff" flip />
              <svg width="14" height="14" viewBox="0 0 14 14" fill="none" className="mt-[14px] mr-[-4px]"><path d="M12.500 1.500v10.500L8 8.500H2V5h6z" stroke="#fff" strokeWidth="1.600" /></svg>
              <div className="mt-[8px] ml-[2px] flex h-[46px] items-start text-[14px] leading-5 font-bold text-white [writing-mode:vertical-rl]">Filtros</div>
            </div>
            <div className="w-px bg-[#f3f2f1]" />
          </div>
          <div className="flex h-[35px] text-[12px] text-[#323130]">
            <div className="flex w-10 items-center justify-between border-r border-[#a8a6a4] pr-[6px] pl-[5px]">
              <svg width="5" height="8" viewBox="0 0 5 8"><path d="M5 0v8L0 4z" fill="#c8c6c4" /></svg>
              <svg width="5" height="8" viewBox="0 0 5 8"><path d="M0 0v8l5-4z" fill="#c8c6c4" /></svg>
            </div>
            <div className="flex w-[71px] items-center justify-center border-r border-[#c8c6c4] pt-px"><Fit w={31}>Inicial</Fit></div>
            <div className="flex w-[79px] items-center justify-center border-r border-[#c8c6c4] pt-px"><Fit w={38}>Vendas</Fit></div>
            <div className="relative flex w-[84px] items-center justify-center border-b-[4px] border-[#117865] bg-white pt-[5px] pr-px"><Fit w={43}>Clientes</Fit>
              <span className="absolute top-1 right-[5px] text-[10px] leading-none">x</span>
            </div>
            <div className="mt-[2px] flex h-[32px] w-[39px] items-center justify-center bg-[#117865]"><Svg s={12}><path d="M6 .5v11M.5 6h11" stroke="#fff" strokeWidth="3" /></Svg></div>
          </div>
        </div>
        <Visualizations />
        <DataPane />
      </div>
      <div className="flex h-6 items-center border-t border-[#dcdad8] pl-[5px] text-[12px] text-[#484644]">
        <Fit w={71} className="pt-px">Página 3 de 3</Fit>
        <div className="flex flex-1 items-center justify-end pr-[23px]">
          <svg width="124" height="13" viewBox="0 0 124 13" fill="none"><path d="M0 6.500h5" stroke="#484644" strokeWidth="1.600" /><path d="M9 6.500h100M59.500 4v5M115 6.500h8M119 2.500v8" stroke="#484644" /><path d="M42 .5v12" stroke="#484644" strokeWidth="4" /></svg>
          <span className="ml-[16px] text-[#605e5c]"><Fit w={22}>68%</Fit></span>
          <svg width="16" height="12" viewBox="0 0 16 12" fill="none" className="ml-[20px]"><path d="M.5.500h15v11H.5z" stroke="#484644" /><path d="M3 5V3h2M11 3h2v2M13 7v2h-2M5 9H3V7" stroke="#484644" /></svg>
        </div>
      </div>
      <Taskbar />
    </div>
  );
}
